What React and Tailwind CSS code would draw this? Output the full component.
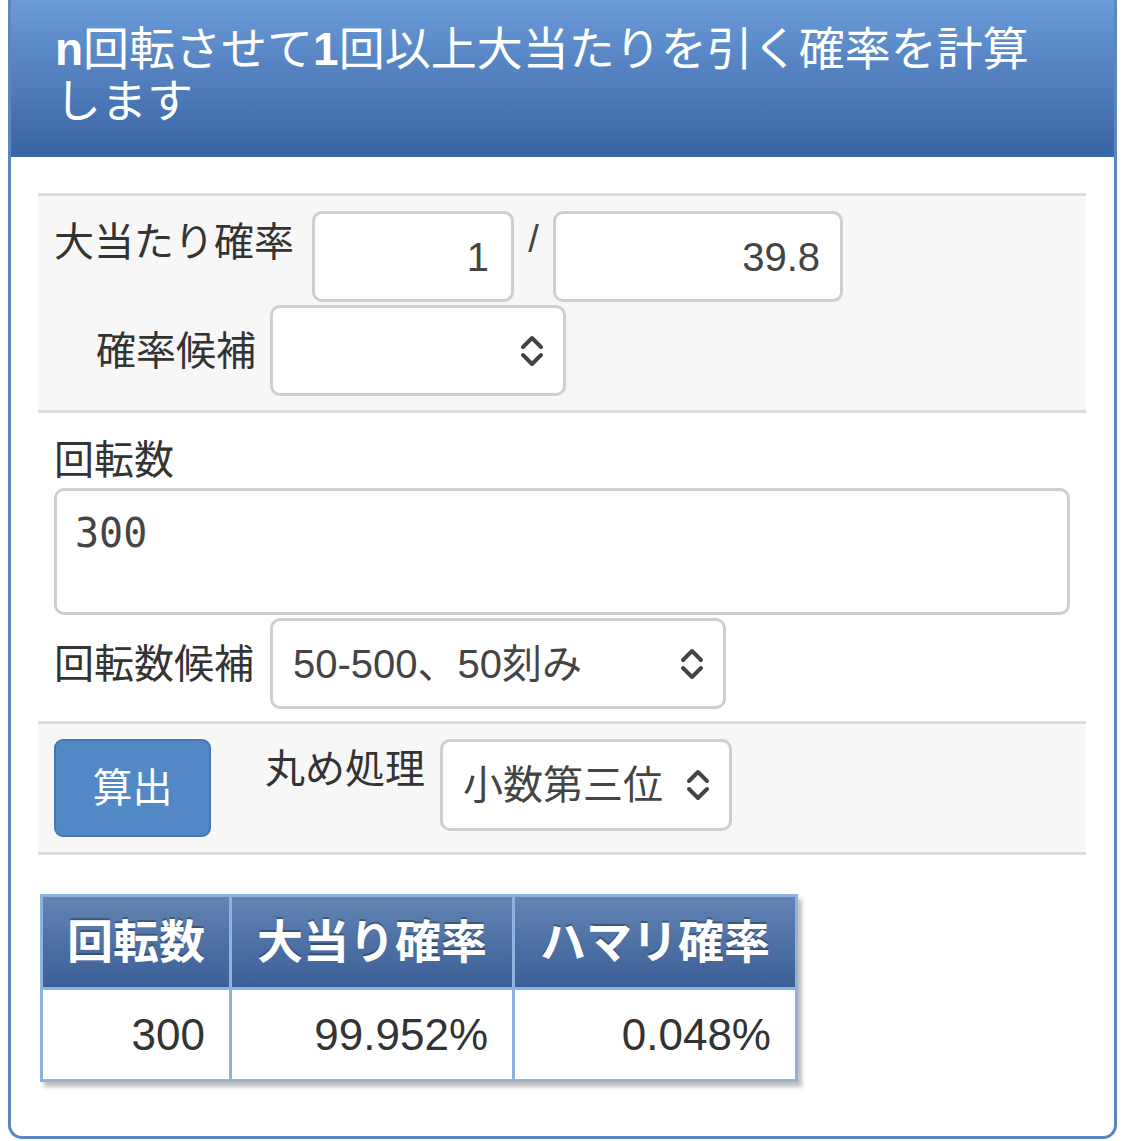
import React from "react";

const Chevron = () => (
    <svg width="26" height="36" viewBox="0 0 26 36" fill="none" stroke="#444" strokeWidth="4" strokeLinecap="round" strokeLinejoin="round">
        <path d="M4 14 L13 5 L22 14" />
        <path d="M4 22 L13 31 L22 22" />
    </svg>
);

const SelectBox = ({ value, className }) => (
    <div className={`relative shrink-0 flex items-center bg-white border-[3px] border-[#cfcfcf] rounded-[10px] ${className}`}>
        <span className="pl-[20px] text-[40px] text-[#444] whitespace-nowrap">{value}</span>
        <span className="absolute right-[18px] top-1/2 -translate-y-1/2 flex">
            <Chevron />
        </span>
    </div>
);

const App = () => {
    return (
        <div className="w-[1131px] min-h-[1141px] bg-white pl-[8px] pr-[14px] pb-[2px] font-['Liberation_Sans','Noto_Sans_CJK_JP',sans-serif] text-[#333]">
            <div className="border-[3px] border-t-0 border-[#5b86c0] rounded-b-[14px] overflow-hidden h-[1139px]">
                <div className="h-[157px] bg-gradient-to-b from-[#6b9bd9] to-[#3a65a5] border-b-[3px] border-[#3c69a8] pl-[44px] pr-[50px] pt-[23px]">
                    <h1 className="text-[46px] leading-[52px] text-white font-normal">
                        <span className="font-bold">n</span>回転させて<span className="font-bold">1</span>回以上大当たりを引く確率を計算します
                    </h1>
                </div>

                <div className="pl-[27px] pr-[28px] pt-[36px]">
                    {/* 大当たり確率 */}
                    <div className="bg-[#f7f7f7] border-y-[3px] border-[#dcdcdc] pl-[16px] pt-[15px] pb-[14px]">
                        <div className="flex items-start">
                            <span className="shrink-0 whitespace-nowrap text-[40px] leading-[56px] pt-[3px] w-[243px]">大当たり確率</span>
                            <div className="shrink-0 ml-[15px] w-[202px] h-[91px] bg-white border-[3px] border-[#cfcfcf] rounded-[10px] flex items-center justify-end pr-[22px] text-[40px] text-[#444]">
                                1
                            </div>
                            <span className="shrink-0 w-[39px] text-center text-[38px] leading-[56px] text-[#444]">/</span>
                            <div className="shrink-0 w-[290px] h-[91px] bg-white border-[3px] border-[#cfcfcf] rounded-[10px] flex items-center justify-end pr-[20px] text-[40px] text-[#444]">
                                39.8
                            </div>
                        </div>
                        <div className="flex items-center mt-[3px]">
                            <span className="shrink-0 whitespace-nowrap text-[40px] w-[202px] text-right">確率候補</span>
                            <SelectBox value="" className="ml-[14px] w-[296px] h-[91px]" />
                        </div>
                    </div>

                    {/* 回転数 */}
                    <div className="pl-[16px] pr-[16px] pt-[22px] pb-[12px]">
                        <div className="text-[40px] leading-[50px]">回転数</div>
                        <div className="mt-[3px] h-[127px] bg-white border-[3px] border-[#cfcfcf] rounded-[10px] px-[18px] pt-[12px] font-['DejaVu_Sans_Mono',monospace] text-[40px] text-[#444]">
                            300
                        </div>
                        <div className="flex items-center mt-[3px]">
                            <span className="shrink-0 whitespace-nowrap text-[40px] w-[216px]">回転数候補</span>
                            <SelectBox value="50-500、50刻み" className="w-[456px] h-[91px]" />
                        </div>
                    </div>

                    {/* 算出 */}
                    <div className="bg-[#f7f7f7] border-y-[3px] border-[#dcdcdc] pl-[16px] pt-[15px] pb-[15px] flex items-start">
                        <button className="shrink-0 w-[157px] h-[98px] bg-[#5388c7] border-[2px] border-[#4677b3] rounded-[9px] text-white text-[40px]">
                            算出
                        </button>
                        <span className="shrink-0 whitespace-nowrap w-[160px] ml-[54px] mt-[5px] text-[40px] leading-[50px]">丸め処理</span>
                        <SelectBox value="小数第三位" className="ml-[15px] w-[292px] h-[92px]" />
                    </div>

                    {/* 結果 */}
                    <div className="pt-[39px] pl-[2px]">
                        <table className="border-collapse shadow-[4px_5px_4px_rgba(0,0,0,0.25)]">
                            <thead>
                                <tr className="bg-gradient-to-b from-[#6384b4] to-[#3a5e95]">
                                    <th className="w-[189px] h-[93px] border-[3px] border-[#8eb3df] text-white text-[46px] font-bold [text-shadow:0_-2px_0_rgba(0,0,0,0.3)]">回転数</th>
                                    <th className="w-[283px] h-[93px] border-[3px] border-[#8eb3df] text-white text-[46px] font-bold [text-shadow:0_-2px_0_rgba(0,0,0,0.3)]">大当り確率</th>
                                    <th className="w-[283px] h-[93px] border-[3px] border-[#8eb3df] text-white text-[46px] font-bold [text-shadow:0_-2px_0_rgba(0,0,0,0.3)]">ハマリ確率</th>
                                </tr>
                            </thead>
                            <tbody>
                                <tr className="bg-white">
                                    <td className="h-[92px] border-[3px] border-[#8eb3df] text-right pr-[24px] text-[44px] text-[#333]">300</td>
                                    <td className="h-[92px] border-[3px] border-[#8eb3df] text-right pr-[24px] text-[44px] text-[#333]">99.952%</td>
                                    <td className="h-[92px] border-[3px] border-[#8eb3df] text-right pr-[24px] text-[44px] text-[#333]">0.048%</td>
                                </tr>
                            </tbody>
                        </table>
                    </div>
                </div>
            </div>
        </div>
    );
};

export default App;
